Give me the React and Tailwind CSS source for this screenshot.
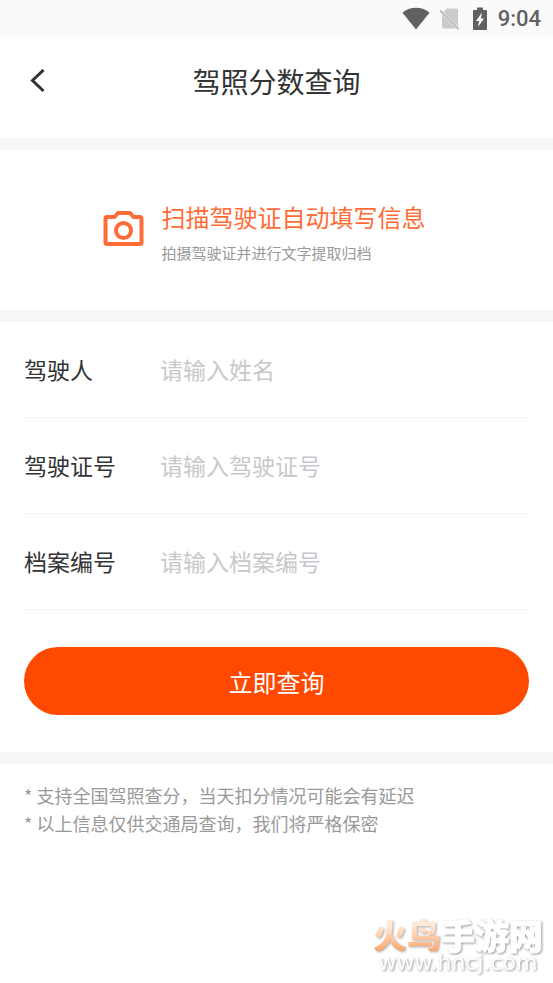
import { useState } from "react";

const fields = [
  { id: "driver", label: "驾驶人", placeholder: "请输入姓名" },
  { id: "license", label: "驾驶证号", placeholder: "请输入驾驶证号" },
  { id: "archive", label: "档案编号", placeholder: "请输入档案编号" },
];

const notes = [
  "* 支持全国驾照查分，当天扣分情况可能会有延迟",
  "* 以上信息仅供交通局查询，我们将严格保密",
];

function StatusBar() {
  return (
    <div className="flex h-[37px] items-center justify-end bg-[#fafafa] pr-3 text-[#616161]">
      <svg className="mr-2 h-7 w-7" viewBox="0 0 28 28" fill="currentColor">
        <path d="M14 24.500 0.5 7.700C4 4.500 8.800 2.800 14 2.800s10 1.700 13.500 4.900z" />
      </svg>
      {/* no sim */}
      <svg className="mr-2.5 h-6 w-6" viewBox="0 0 24 24">
        <path d="M9 1.500h9.500a1.500 1.500 0 0 1 1.500 1.500v16.500L5.500 5z" fill="#cbcbcb" />
        <path d="M4 7.500 18 21.500H5.500A1.500 1.500 0 0 1 4 20z" fill="#cbcbcb" />
        <path d="M2 3.500 20.500 22" stroke="#b8b8b8" strokeWidth="1.800" />
      </svg>
      <svg className="mr-2.5 h-6 w-4" viewBox="0 0 16 24">
        <path
          d="M5 0.500h6v2.500h3a1 1 0 0 1 1 1v18a1 1 0 0 1-1 1H2a1 1 0 0 1-1-1V4a1 1 0 0 1 1-1h3z"
          fill="currentColor"
        />
        <path d="M10 5.500 4 14h3.200L6 20l6-8.500H8.900z" fill="#fafafa" />
      </svg>
      <span className="font-[Roboto,sans-serif] text-[22px] font-medium">
        9:04
      </span>
    </div>
  );
}

function Watermark() {
  return (
    <div className="pointer-events-none fixed right-2.5 bottom-2 flex flex-col items-center">
      <div className="flex text-[34px] leading-8 font-black">
        <span className="bg-linear-to-b from-[#ffe9d9] from-20% to-[#ffa667] bg-clip-text text-transparent drop-shadow-[1px_1px_1px_#aaa]">
          火鸟
        </span>
        <span className="text-white drop-shadow-[1px_1px_1px_#999] [-webkit-text-stroke:1px_white]">
          手游网
        </span>
      </div>
      <span className="font-['DejaVu_Sans',sans-serif] text-[22px] leading-6 text-white drop-shadow-[1px_1px_1px_#999]">
        www.hncj.com
      </span>
    </div>
  );
}

function App() {
  const [values, setValues] = useState({ driver: "", license: "", archive: "" });

  const handleChange = (e) => {
    setValues({ ...values, [e.target.id]: e.target.value });
  };

  return (
    <div className="min-h-screen bg-white font-['Noto_Sans_CJK_SC',sans-serif] text-[#333]">
      <StatusBar />

      <header className="grid grid-cols-[48px_1fr_48px] items-start px-3 pt-6 pb-9">
        <button type="button" aria-label="返回" className="flex h-10 items-center pl-4">
          <svg
            className="h-6 w-5"
            viewBox="0 0 20 24"
            fill="none"
            stroke="currentColor"
            strokeWidth="3"
          >
            <path d="M15.500 1 4.500 11.500 15.500 22" />
          </svg>
        </button>
        <h1 className="text-center text-[28px] leading-[41px]">
          驾照分数查询
        </h1>
      </header>

      <section className="border-y-12 border-[#f6f6f6]">
        <button
          type="button"
          className="flex h-40 w-full items-center justify-center gap-4 pr-[26px] text-left"
        >
          <svg
            className="h-10 w-11 text-[#ff6c36]"
            viewBox="0 0 44 40"
            fill="none"
            stroke="currentColor"
            strokeWidth="4"
          >
            <path
              d="M5 7h7.500l3.500-4h12l3.500 4H38a1.500 1.500 0 0 1 1.500 1.500v24a1.500 1.500 0 0 1-1.500 1.500H5a1.500 1.500 0 0 1-1.500-1.500v-24A1.500 1.500 0 0 1 5 7z"
              strokeLinejoin="round"
            />
            <circle cx="21.500" cy="20.500" r="7.500" />
          </svg>
          <span className="flex flex-col pt-1.5">
            <span className="text-[24px] leading-10 text-[#ff6c36]">
              扫描驾驶证自动填写信息
            </span>
            <span className="text-[15px] leading-8 text-[#999]">
              拍摄驾驶证并进行文字提取归档
            </span>
          </span>
        </button>
      </section>

      <form className="px-6" onSubmit={(e) => e.preventDefault()}>
        {fields.map((field) => (
          <div
            key={field.id}
            className="flex h-24 items-center border-b border-[#f3f3f3] text-[23px]"
          >
            <label htmlFor={field.id} className="w-[136px] shrink-0">
              {field.label}
            </label>
            <input
              id={field.id}
              type="text"
              value={values[field.id]}
              onChange={handleChange}
              placeholder={field.placeholder}
              className="min-w-0 flex-1 outline-none placeholder:text-[#c8c8cc]"
            />
          </div>
        ))}
        <button
          type="submit"
          className="my-[37px] h-17 w-full rounded-full bg-[#ff4800] pt-0.5 text-[24px] text-white"
        >
          立即查询
        </button>
      </form>

      <section className="border-t-12 border-[#f6f6f6] px-6 pt-[17px] text-[18px] leading-7 text-[#999]">
        {notes.map((note) => (
          <p key={note}>{note}</p>
        ))}
      </section>

      <Watermark />
    </div>
  );
}

export default App;
